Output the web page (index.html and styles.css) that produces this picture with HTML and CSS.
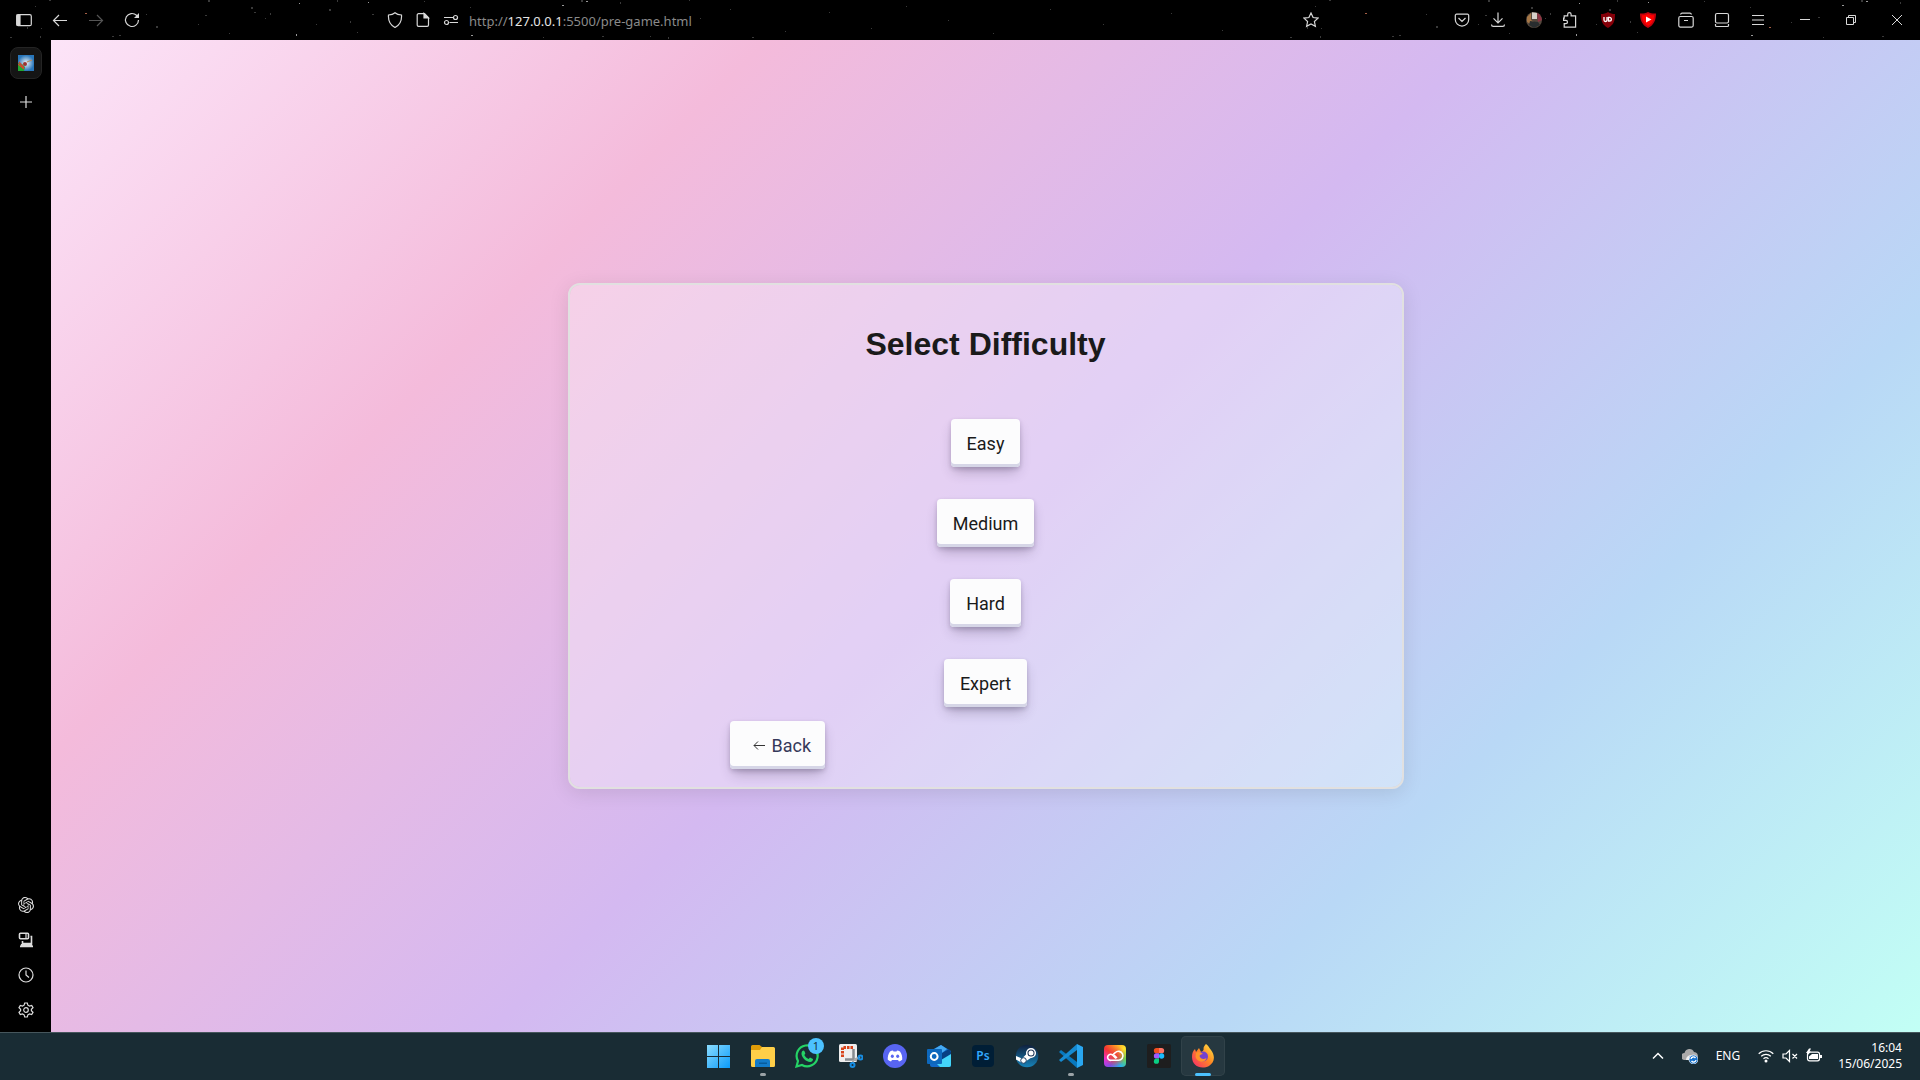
FILE: index.html
```html
<!DOCTYPE html>
<html lang="en">
<head>
<meta charset="utf-8">
<title>Select Difficulty</title>
<link rel="stylesheet" href="styles.css">
</head>
<body>
<header class="toolbar">
  <svg class="stars" aria-hidden="true">
    <defs>
      <pattern id="sky" width="1280" height="40" patternUnits="userSpaceOnUse">
        <g fill="#3a3a3a"><path d="M49 0h2v1h-2zM35 6h1v1h-1zM208 0h2v2h-2zM270 13h1v2h-1zM329 9h2v2h-2zM337 0h1v2h-1zM350 21h1v2h-1zM198 24h1v1h-1zM156 26h2v2h-2zM146 14h1v1h-1zM112 36h2v1h-2zM119 35h2v1h-2zM27 27h1v2h-1zM10 37h2v1h-2zM41 28h1v1h-1zM40 36h1v2h-1zM205 15h2v1h-2zM251 7h2v2h-2zM254 12h2v1h-2zM229 33h1v1h-1zM265 18h1v1h-1zM316 24h1v1h-1zM357 32h1v1h-1zM372 14h2v1h-2zM424 1h1v1h-1zM581 0h2v2h-2zM543 37h1v1h-1zM602 36h2v1h-2zM620 2h1v2h-1zM650 36h1v1h-1zM668 37h1v2h-1zM689 0h1v1h-1zM752 37h2v1h-2z"/><path d="M470 7h1v1h-1zM511 22h1v1h-1zM538 17h2v1h-2zM700 18h1v1h-1zM730 9h1v1h-1zM785 31h1v1h-1zM829 12h1v1h-1zM871 28h1v1h-1zM906 6h1v1h-1zM948 20h1v1h-1zM993 33h1v1h-1zM1050 9h1v1h-1zM1103 24h1v1h-1zM1171 13h1v1h-1zM1222 30h1v1h-1z"/></g>
        <g fill="#999"><path d="M299 3h1v1h-1zM368 2h1v1h-1zM296 34h1v2h-1zM586 1h2v1h-2zM562 5h2v1h-2zM471 35h2v1h-2z"/></g>
        <path fill="#a65f45" d="M85 13h2v1h-2zM489 27h2v1h-2z"/>
      </pattern>
    </defs>
    <rect width="100%" height="100%" fill="url(#sky)"/>
  </svg>
  <div class="tools nav-tools">
    <button class="tool" aria-label="Sidebar"><svg class="i" viewBox="0 0 16 16"><rect x=".7" y="2.7" width="14.6" height="11" rx="1.5"/><path d="M1 3h3v10H1z" fill="currentColor"/></svg></button>
    <button class="tool" aria-label="Back"><svg class="i" viewBox="0 0 16 16"><path d="M15 8.5H1.5M7 3 1.5 8.5 7 14"/></svg></button>
    <button class="tool dim" aria-label="Forward"><svg class="i" viewBox="0 0 16 16"><path d="M1 8.5h13.500M9 3l5.500 5.500L9 14"/></svg></button>
    <button class="tool" aria-label="Reload"><svg class="i" viewBox="0 0 16 16"><path d="M14.500 8a6.500 6.500 0 1 1-2-4.700L14 5"/><path d="M15 1v5h-5z" fill="currentColor" stroke="none"/></svg></button>
  </div>
  <div class="address">
    <button class="mini" aria-label="Protection"><svg class="i" viewBox="0 0 16 16"><path d="M8 .7c2 1.700 4 2.100 6.500 2.300C15 9 12 13.500 8 15.500 4 13.500 1 9 1.500 3 4 2.800 6 2.400 8 .7z"/></svg></button>
    <button class="mini" aria-label="Page information"><svg class="i" viewBox="0 0 16 16"><path d="M3.500 1.700h6l4 4V13a1.300 1.300 0 0 1-1.300 1.300H3.500A1.300 1.300 0 0 1 2.200 13V3a1.300 1.300 0 0 1 1.300-1.300z"/><path d="M9 1.500V6h4.500z" fill="currentColor"/></svg></button>
    <button class="mini" aria-label="Permissions"><svg class="i" viewBox="0 0 16 16"><path d="M1 5.500h9M6.500 10.500H15"/><circle cx="12.500" cy="5.500" r="2"/><circle cx="3.500" cy="10.500" r="2"/></svg></button>
    <span class="url">http://<b>127.0.0.1</b>:5500/pre-game.html</span>
    <button class="tool" aria-label="Bookmark"><svg class="i" viewBox="0 0 16 16"><path d="m8 1 2.100 4.500 5 .6-3.700 3.400 1 4.900L8 12l-4.400 2.400 1-4.900L.9 6.100l5-.6z"/></svg></button>
  </div>
  <div class="tools">
    <button class="tool" aria-label="Pocket"><svg class="i" viewBox="0 0 16 16"><path d="M2.500 2.200h11a1.200 1.200 0 0 1 1.200 1.200v4a6.700 6.700 0 0 1-13.400 0v-4a1.200 1.200 0 0 1 1.200-1.200zM4.500 6 8 9.400 11.500 6"/></svg></button>
    <button class="tool" aria-label="Downloads"><svg class="i" viewBox="0 0 16 16"><path d="M8 .5v10M3.500 6.300 8 10.800l4.500-4.500M1.500 12.500c0 1.300.6 1.900 1.800 1.900h9.400c1.200 0 1.800-.6 1.800-1.900"/></svg></button>
    <button class="tool" aria-label="Account"><svg class="i" viewBox="0 0 16 16" stroke="none"><circle cx="8" cy="8" r="8" fill="#55483d"/><path d="M6 .3 11 1v6H6z" fill="#d5cfc8"/><path d="M11 1c3 1 4.500 4 5 7l-4 2z" fill="#8d3343"/><path d="M1 5l4-4v7l3 2-2 3-5-3z" fill="#a57646"/><path d="M4 9l8 1 2 3-6 3-5-3z" fill="#292d2f"/></svg></button>
    <button class="tool" aria-label="Extensions"><svg class="i" viewBox="0 0 16 16"><path d="M2.200 6.200V3.800h3.500V2.300a1.700 1.700 0 0 1 3.400 0v1.500h4.500v11.400H2.200v-3.500h1.600a1.700 1.700 0 0 0 0-3.400H1.600V6.200z"/></svg></button>
    <button class="tool wide" aria-label="uBlock"><svg class="i" viewBox="0 0 16 16" stroke="none"><path d="M8 0c2 1.500 4.500 2 7 2 0 7-1 10.500-7 14C2 12.500 1 9 1 2c2.500 0 5-.5 7-2z" fill="#850009"/><path d="M4 5v3a1.500 1.500 0 0 0 3 0V5M8.500 5.300V9h1a1.800 1.800 0 0 0 0-3.700z" fill="none" stroke="#fff" stroke-width="1.300"/></svg></button>
    <button class="tool wide" aria-label="Video blocker"><svg class="i" viewBox="0 0 16 16" stroke="none"><path d="M8 0c2.500 1.500 5 1.600 8 1.500C16 8 14 13 8 16 2 13 0 8 0 1.500 3 1.600 5.500 1.500 8 0z" fill="#c3000c"/><path d="M8 2c2 1 4 1.300 6 1.300C14 8 12 12 8 14 4 12 2 8 2 3.300 4 3.300 6 3 8 2z" fill="#f00"/><path d="M6 4.500 11.500 7.500 6 10.500z" fill="#fff"/></svg></button>
    <button class="tool" aria-label="Archive"><svg class="i" viewBox="0 0 16 16"><rect x=".8" y="4.500" width="14.400" height="10.600" rx="1.500"/><path d="M2.500 2.500c.4-1 .8-1.300 1.500-1.300h8c.7 0 1.100.3 1.500 1.300M6 8.500h4"/></svg></button>
    <button class="tool" aria-label="Panel"><svg class="i" viewBox="0 0 16 16"><rect x="1.500" y="1.500" width="13" height="9.500" rx="1.500"/><path d="M1.500 12v1.500c0 .8.4 1 1 1h11c.6 0 1-.2 1-1V12"/></svg></button>
    <button class="tool" aria-label="Menu"><svg class="i" viewBox="0 0 16 16"><path d="M2 3.500h12M2 8h12M2 12.500h12"/></svg></button>
  </div>
  <div class="tools window-tools">
    <button class="tool win" aria-label="Minimize"><svg class="i thin" viewBox="0 0 16 16"><path d="M3 7.500h10"/></svg></button>
    <button class="tool win" aria-label="Restore"><svg class="i thin" viewBox="0 0 16 16"><path d="M3.500 5.500h7v7h-7zM5.500 5.500v-2h7v7h-2"/></svg></button>
    <button class="tool win" aria-label="Close"><svg class="i thin" viewBox="0 0 16 16"><path d="m3 3 10 10M13 3 3 13"/></svg></button>
  </div>
</header>
<div class="browser">
  <aside class="sidebar">
    <button class="tab" aria-label="Open tab"><svg class="i" viewBox="0 0 16 16" stroke="none"><defs><radialGradient id="fav"><stop offset="0" stop-color="#f4f7f8"/><stop offset="1" stop-color="#2876ba"/></radialGradient></defs><path d="M0 0h16v16H0z" fill="url(#fav)"/><path d="M0 8 4 9l3 3-1 4H0z" fill="#20a831"/><path d="m0 9 6 5M1 7l5 6" stroke="#d44531"/><circle cx="7" cy="9" r="2" fill="#9a3432"/><path d="m9 7 5-2" stroke="#b58b62"/></svg></button>
    <button class="side" aria-label="New tab"><svg class="i" viewBox="0 0 16 16"><path d="M8 2v12M2 8h12"/></svg></button>
    <div class="side-bottom">
      <button class="side" aria-label="Chatbot"><svg class="i" viewBox="0 0 24 24" stroke="none"><path fill="currentColor" d="M22.2819 9.8211a5.9847 5.9847 0 0 0-.5157-4.9108 6.0462 6.0462 0 0 0-6.5098-2.9A6.0651 6.0651 0 0 0 4.9807 4.1818a5.9847 5.9847 0 0 0-3.9977 2.9 6.0462 6.0462 0 0 0 .7427 7.0966 5.98 5.98 0 0 0 .511 4.9107 6.051 6.051 0 0 0 6.5146 2.9001A5.9847 5.9847 0 0 0 13.2599 24a6.0557 6.0557 0 0 0 5.7718-4.2058 5.9894 5.9894 0 0 0 3.9977-2.9001 6.0557 6.0557 0 0 0-.7475-7.073zm-9.022 12.6081a4.4755 4.4755 0 0 1-2.8764-1.0408l.1419-.0804 4.7783-2.7582a.7948.7948 0 0 0 .3927-.6813v-6.7369l2.02 1.1686a.071.071 0 0 1 .038.052v5.5826a4.504 4.504 0 0 1-4.4945 4.4944zm-9.6607-4.1254a4.4708 4.4708 0 0 1-.5346-3.0137l.142.0852 4.783 2.7582a.7712.7712 0 0 0 .7806 0l5.8428-3.3685v2.3324a.0804.0804 0 0 1-.0332.0615L9.74 19.9502a4.4992 4.4992 0 0 1-6.1408-1.6464zM2.3408 7.8956a4.485 4.485 0 0 1 2.3655-1.9728V11.6a.7664.7664 0 0 0 .3879.6765l5.8144 3.3543-2.0201 1.1685a.0757.0757 0 0 1-.071 0l-4.8303-2.7865A4.504 4.504 0 0 1 2.3408 7.872zm16.5963 3.8558L13.1038 8.364 15.1192 7.2a.0757.0757 0 0 1 .071 0l4.8303 2.7913a4.4944 4.4944 0 0 1-.6765 8.1042v-5.6772a.79.79 0 0 0-.407-.667zm2.0107-3.0231l-.142-.0852-4.7735-2.7818a.7759.7759 0 0 0-.7854 0L9.409 9.2297V6.8974a.0662.0662 0 0 1 .0284-.0615l4.8303-2.7866a4.4992 4.4992 0 0 1 6.6802 4.66zM8.3065 12.863l-2.02-1.1638a.0804.0804 0 0 1-.038-.0567V6.0742a4.4992 4.4992 0 0 1 7.3757-3.4537l-.142.0805L8.704 5.459a.7948.7948 0 0 0-.3927.6813zm1.0976-2.3654l2.602-1.4998 2.6069 1.4998v2.9994l-2.5974 1.4997-2.6067-1.4997Z"/></svg></button>
      <button class="side" aria-label="Synced devices"><svg class="i" viewBox="0 0 16 16"><rect x="1.500" y="1.200" width="9" height="5.600" rx="1" stroke-width="1.600"/><path d="M8 2v4"/><path d="M12.500 4.500h1v7h-9V9M2 14.500h13" stroke-width="1.600"/><path d="M3 12h11l1 3H2z" fill="currentColor" stroke="none"/></svg></button>
      <button class="side" aria-label="History"><svg class="i" viewBox="0 0 16 16"><circle cx="8" cy="8" r="7"/><path d="M8 3.500V8l3 2.500"/></svg></button>
      <button class="side" aria-label="Settings"><svg class="i" viewBox="0 0 16 16"><path d="M6.700 1h2.600l.6 2.200 1.600.9 2.200-.6L15 5.700 13.400 7.300v1.400l1.600 1.600-1.300 2.200-2.200-.6-1.600.9L9.300 15H6.700l-.6-2.200-1.600-.9-2.200.6L1 10.300l1.600-1.600V7.300L1 5.700l1.300-2.200 2.200.6 1.600-.9z"/><circle cx="8" cy="8" r="2.300"/></svg></button>
    </div>
  </aside>
  <main class="game">
    <section class="card">
      <h1>Select Difficulty</h1>
      <div class="levels">
        <button class="key">Easy</button>
        <button class="key">Medium</button>
        <button class="key">Hard</button>
        <button class="key">Expert</button>
      </div>
      <div class="back-row">
        <button class="key back"><svg class="arrow" viewBox="0 0 12 10"><path d="M12 4.500H1M5 .5l-4 4 4 4"/></svg>Back</button>
      </div>
    </section>
  </main>
</div>
<footer class="taskbar">
  <nav class="apps">
    <button class="app" aria-label="Start"><svg viewBox="0 0 24 24"><defs><linearGradient id="w" x2="1" y2="1"><stop stop-color="#8adcff"/><stop offset="1" stop-color="#0b9bfa"/></linearGradient></defs><path d="M0 1h11v11H0zM12 1h11v11H12zM0 13h11v11H0zM12 13h11v11H12z" fill="url(#w)"/></svg></button>
    <button class="app running" aria-label="Files"><svg viewBox="0 0 24 24"><path d="M0 2.500A1.500 1.500 0 0 1 1.500 1h7L11 3v4H0z" fill="#e09c08"/><path d="M0 6h9l2-3h11.500A1.500 1.500 0 0 1 24 4.500v17a1.500 1.500 0 0 1-1.500 1.500h-21A1.500 1.500 0 0 1 0 21.500z" fill="#ffcf48"/><path d="M4 23v-6q0-2 2-2h11q2 0 2 2v6z" fill="#137bc9"/><path d="M8 18.500h8v1.500H8z" fill="#085c9c"/></svg></button>
    <button class="app" aria-label="WhatsApp"><svg viewBox="0 0 24 24"><path d="M1.500 22.500 3 17a10.500 10.500 0 1 1 4 4z" fill="none" stroke="#25d366" stroke-width="2.200"/><path d="M7 7.500c1-1.500 2-1.300 2.500-.2l.8 1.900c.1.500-.8 1.500-1 1.800 1 2 2.500 3.300 4.300 4l1.400-1.500 3 1.400c.2 1.500-1 2.900-2.700 3C11 18 6 13 6.500 9z" fill="#25d366"/></svg><span class="badge">1</span></button>
    <button class="app" aria-label="Snipping tool"><svg viewBox="0 0 24 24"><rect width="18" height="18" rx="1.500" fill="#eee"/><path d="M14 3.500H3.500V13" fill="none" stroke="#d84319" stroke-width="3" stroke-dasharray="2.500 1"/><path d="M14.500 5v11M6 15.500h12" stroke="#888c90" stroke-width="2.500"/><path d="m15 16 6-3M14 16v4" stroke="#aaa" stroke-width="2"/><circle cx="21.500" cy="13.500" r="2" fill="none" stroke="#178de2" stroke-width="2"/><circle cx="13.500" cy="21" r="2" fill="none" stroke="#178de2" stroke-width="2"/></svg></button>
    <button class="app" aria-label="Discord"><svg viewBox="0 0 24 24"><circle cx="12" cy="12" r="12" fill="#5865f2"/><path d="M7 7.500c1-.6 2-.9 3-1l.5 1h3l.5-1c1 .1 2 .4 3 1 1.800 2.500 2.500 5.500 2.200 8.300-1 .9-2 1.300-3.200 1.700l-1-1.500H9l-1 1.500c-1.200-.4-2.200-.8-3.200-1.700C4.500 13 5.200 10 7 7.500z" fill="#fff"/><ellipse cx="9.300" cy="12.300" rx="1.500" ry="1.700" fill="#5865f2"/><ellipse cx="14.700" cy="12.300" rx="1.500" ry="1.700" fill="#5865f2"/></svg></button>
    <button class="app" aria-label="Outlook"><svg viewBox="0 0 24 24"><path d="M3 7 14 1l10 6v14q0 2-2 2H5q-2 0-2-2z" fill="#1269c7"/><path d="m4 7 10-6 6 4-9 7z" fill="#45aaf3"/><path d="m10 12 12-7 2 3v5l-11 5z" fill="#073f83"/><path d="m24 10-15 9 4 4h9q2 0 2-2z" fill="#43d5fa"/><rect y="5" width="15" height="15" rx="1" fill="#0d68bd"/><circle cx="7.200" cy="12.500" r="3.400" fill="none" stroke="#fff" stroke-width="2"/></svg></button>
    <button class="app ps" aria-label="Photoshop"><span>Ps</span></button>
    <button class="app" aria-label="Steam"><svg viewBox="0 0 24 24"><defs><linearGradient id="s" x2="0" y2="1"><stop stop-color="#10203d"/><stop offset="1" stop-color="#1784ba"/></linearGradient></defs><circle cx="12" cy="12" r="11.300" fill="url(#s)"/><path d="m1 12 6 2.500 5-5 6 3-6 4-4 3-7-4z" fill="#fff"/><circle cx="16" cy="9" r="4.300" fill="#183052" stroke="#fff" stroke-width="1.500"/><circle cx="16" cy="9" r="2.500" fill="#fff"/><circle cx="8.500" cy="16.500" r="2.800" fill="#fff" stroke="#163d64"/></svg></button>
    <button class="app running" aria-label="Visual Studio Code"><svg viewBox="0 0 24 24"><path d="m0 8 2-2 16 12v6L0 8z" fill="#0878be"/><path d="M0 16 18 0v6L2 18z" fill="#168bd2"/><path d="M18 0 24 3v18l-6 3z" fill="#29a7f1"/></svg></button>
    <button class="app" aria-label="Creative Cloud"><svg viewBox="0 0 24 24"><foreignObject x="1" y="1" width="22" height="22"><div class="rainbow"></div></foreignObject><path d="M13 15.500 9.500 12a3 3 0 1 0-1.500 5.300h7.500a4.500 4.500 0 1 0-3.300-7.600L9.500 12M11 12l3 3" fill="none" stroke="#fff" stroke-width="1.600" transform="translate(0 -1)"/></svg></button>
    <button class="app" aria-label="Figma"><svg viewBox="0 0 24 24"><rect width="24" height="24" rx="1.500" fill="#1e1e1e"/><path d="M12 4H9.500a2.600 2.600 0 0 0 0 5.300H12z" fill="#f24e1e"/><path d="M12 4h2.500a2.600 2.600 0 0 1 0 5.300H12z" fill="#ff7262"/><path d="M12 9.300H9.500a2.600 2.600 0 0 0 0 5.300H12z" fill="#a259ff"/><circle cx="14.600" cy="12" r="2.650" fill="#1abcfe"/><path d="M12 14.600H9.500a2.600 2.600 0 1 0 2.500 2.600z" fill="#0acf83"/></svg></button>
    <button class="app active" aria-label="Firefox"><svg viewBox="0 0 24 24"><defs><linearGradient id="f" x1="1" x2="0" y2="1"><stop stop-color="#fff04a"/><stop offset=".45" stop-color="#ff8a22"/><stop offset="1" stop-color="#f6246f"/></linearGradient></defs><path d="M15 0c3 2 3 4 5 6 5 7 3 13-2 16C10 26 1 22 1 13c0-4 1-6 3-8l1 3 3-4 2 4c2-1 3-2 2.500-4C13 2 14 1 15 0z" fill="url(#f)"/><circle cx="12" cy="12.500" r="5" fill="#7441cf"/><path d="M5 9c2-2 5-1 7 1-2 0-3 1-3.500 2 1 3 4 4 7 2-1 5-9 5-11-1z" fill="#ff932a"/></svg></button>
  </nav>
  <div class="tray">
    <button class="tray-icon" aria-label="Hidden icons"><svg class="i" viewBox="0 0 16 16"><path d="m3 10.500 5-5 5 5" stroke-width="1.500"/></svg></button>
    <button class="tray-icon" aria-label="Cloud sync"><svg class="i" viewBox="0 0 16 16" stroke="none"><path d="M3 12a3.500 3.500 0 0 1-.5-7A5 5 0 0 1 12 4c3 .5 4 2 4 5l-4 3z" fill="#aaa"/><path d="M4 12c0-4 4-6 8-4l-1 4z" fill="#eee"/><circle cx="11.500" cy="11.500" r="4.500" fill="#1672ce" stroke="#fff" stroke-width=".7"/><path d="M9 11a2.500 2.500 0 0 1 4.500-1M14 12a2.500 2.500 0 0 1-4.500 1" fill="none" stroke="#fff" stroke-width="1.300"/></svg></button>
    <span class="lang">ENG</span>
    <div class="status">
      <svg class="i" viewBox="0 0 16 16"><path d="M.7 5.700a10.500 10.500 0 0 1 14.600 0M3.200 8.300a7 7 0 0 1 9.600 0M5.500 10.700a3.800 3.800 0 0 1 5 0"/><circle cx="8" cy="13" r="1.500" fill="currentColor" stroke="none"/></svg>
      <svg class="i" viewBox="0 0 16 16"><path d="M1 6h3l3.500-3.500v11L4 10H1zM10.500 6l4.500 4.500M15 6l-4.500 4.500"/></svg>
      <svg class="i" viewBox="0 0 16 16"><rect x="1.500" y="4.200" width="12" height="8.600" rx="2"/><path d="M6 6h6v5H3V8.500zM14 7h2v3h-2z" fill="currentColor" stroke="none"/><path d="M3 .5 0 5h2L1 8l4-4.500H3.500L5 .5z" fill="currentColor" stroke="none"/></svg>
    </div>
    <time class="clock">16:04<br>15/06/2025</time>
  </div>
</footer>
</body>
</html>
```
FILE: styles.css
```css
* { box-sizing: border-box; }

body {
  margin: 0;
  min-height: 100vh;
  display: flex;
  flex-direction: column;
  background: #000;
  font-family: "Noto Sans", "Open Sans", sans-serif;
}

button {
  margin: 0;
  padding: 0;
  border: 0;
  background: none;
  color: inherit;
  font: inherit;
}

.i {
  width: 16px;
  height: 16px;
  fill: none;
  stroke: currentColor;
  stroke-width: 1.2;
}
.i[stroke="none"] { stroke: none; }
.thin { stroke-width: 1; }

/* Browser toolbar */
.toolbar {
  position: relative;
  height: 40px;
  display: flex;
  align-items: center;
  color: #d8d8d8;
}
.stars {
  position: absolute;
  inset: 0;
  width: 100%;
  height: 100%;
}
.tools, .address {
  position: relative;
  display: flex;
  align-items: center;
}
.nav-tools { padding-left: 6px; }
.window-tools { padding-left: 6px; }
.tool, .mini {
  width: 36px;
  height: 32px;
  flex: none;
  display: grid;
  place-items: center;
}
.mini { width: 28px; }
.wide { width: 40px; }
.win { width: 46px; }
.dim { color: #555; }
.address {
  flex: 1;
  margin: 0 115px 0 231px;
}
.url {
  flex: 1;
  padding: 2px 0 0 4px;
  font-size: 13px;
  line-height: 20px;
  color: #8a8a8a;
}
.url b {
  font-weight: 400;
  color: #e6e6e6;
}

/* Sidebar and page */
.browser {
  flex: 1;
  display: flex;
}
.sidebar {
  width: 51px;
  padding: 7px 0 6px;
  display: flex;
  flex-direction: column;
  align-items: center;
  color: #ddd;
}
.tab, .side {
  width: 32px;
  height: 32px;
  display: grid;
  place-items: center;
}
.tab {
  margin-bottom: 7px;
  border: 1px solid #242424;
  border-radius: 8px;
  background: #151515;
}
.side-bottom {
  margin-top: auto;
  display: grid;
  gap: 3px;
}
.game {
  flex: 1;
  display: grid;
  place-items: center;
  background: linear-gradient(135deg, #fce4f8, #f4bbdb, #d4b9f1, #b9d8f6, #c2fff5);
}

/* Difficulty card */
.card {
  width: 836px;
  max-width: 100%;
  padding: 39px 16px 18px;
  border: 2px solid #e1e0e0;
  border-radius: 12px;
  background: rgba(255, 255, 255, 0.33);
  background-clip: padding-box;
  box-shadow: 0 4px 20px rgba(0, 0, 0, 0.1);
  text-align: center;
}
h1 {
  margin: 0;
  font: bold 32px/40px "Liberation Sans", Arial, sans-serif;
  color: #1a1a1a;
}
.levels {
  padding-top: 55px;
  display: grid;
  justify-items: center;
  gap: 32px;
}
.key {
  height: 48px;
  padding: 2px 16px 0;
  border-radius: 4px;
  background: #fcfcfd;
  box-shadow: rgba(45, 35, 66, 0.2) 0 2px 4px, rgba(45, 35, 66, 0.3) 0 7px 13px -3px, #d6d6e7 0 -3px 0 inset;
  color: #1a1a1a;
  font: 18px/24px Roboto, sans-serif;
}
.back-row {
  width: 512px;
  max-width: 100%;
  margin: 14px auto 0;
  display: flex;
}
.back {
  padding: 2px 14px 0 23px;
  display: flex;
  align-items: center;
  gap: 7px;
  color: #36395a;
}
.arrow {
  width: 12px;
  height: 10px;
  fill: none;
  stroke: #333;
}

/* Taskbar */
.taskbar {
  height: 48px;
  display: grid;
  grid-template-columns: 1fr auto 1fr;
  align-items: center;
  border-top: 1px solid #46565c;
  background: #192c34;
  color: #fff;
}
.apps {
  grid-column: 2;
  display: flex;
  padding: 0 0 1px 2px;
}
.app {
  position: relative;
  width: 44px;
  height: 40px;
  display: grid;
  place-items: center;
}
.app svg {
  width: 24px;
  height: 24px;
}
.running::after, .active::after {
  content: "";
  position: absolute;
  bottom: 0;
  left: 19px;
  width: 6px;
  height: 3px;
  border-radius: 2px;
  background: #9ba3a7;
}
.active::after {
  left: 14px;
  width: 16px;
  background: #4cc2ff;
}
.active {
  border-radius: 5px;
  background: #263840;
  box-shadow: inset 0 0 0 1px #314249;
}
.badge {
  position: absolute;
  top: 2px;
  right: 5px;
  width: 16px;
  height: 16px;
  border-radius: 8px;
  background: #4cc2ff;
  color: #14303e;
  font-size: 11px;
  line-height: 16px;
}
.ps span {
  width: 22px;
  height: 22px;
  border-radius: 4px;
  background: #001e36;
  color: #31a8ff;
  font-size: 12px;
  font-weight: 600;
  line-height: 22px;
}
.rainbow {
  height: 22px;
  border-radius: 4px;
  background: radial-gradient(#ef483c 15%, transparent 70%), conic-gradient(#ff9b22, #ffe12f, #6cda49, #26aef2, #794fe8, #f22bd1, #f33332, #ff9b22);
}
.tray {
  display: flex;
  align-items: center;
  justify-content: flex-end;
  padding: 0 18px 1px 0;
}
.tray-icon {
  width: 32px;
  height: 32px;
  display: grid;
  place-items: center;
}
.lang {
  margin-left: 10px;
  font-size: 12px;
  line-height: 16px;
}
.status {
  margin: 0 16px 0 18px;
  display: flex;
  gap: 8px;
}
.clock {
  font-size: 12px;
  line-height: 16px;
  text-align: right;
}
```
